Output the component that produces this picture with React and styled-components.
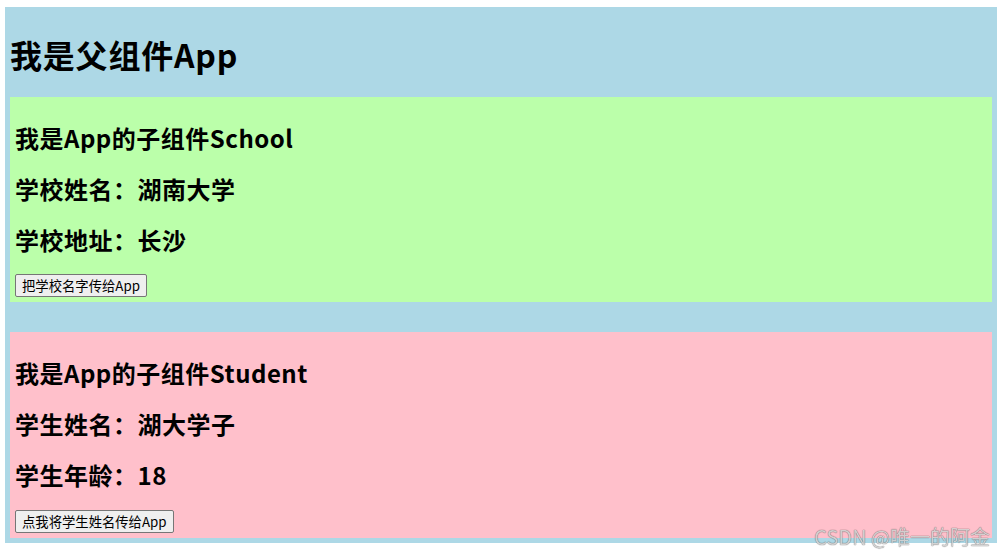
import React from "react";
import styled, { createGlobalStyle } from "styled-components";

const Global = createGlobalStyle`
  html, body { background: #ffffff; }
  body {
    margin: 7px 8px 0 5px;
    font-family: "Noto Sans CJK SC", "Noto Sans", sans-serif;
    color: #000;
  }
`;

const AppBox = styled.div`
  background-color: #add8e6;
  padding: 5px;
`;

const Title = styled.h1`
  font-size: 32px;
  line-height: 42px;
  font-weight: 700;
  margin: 21.44px 0;
  letter-spacing: 0.8px;
`;

const Panel = styled.div`
  background-color: ${(p) => p.$bg};
  padding: 5px;
  margin-top: ${(p) => p.$gap || 0}px;
`;

const Heading = styled.h2`
  font-size: 24px;
  line-height: 31px;
  font-weight: 700;
  margin: 19.9px 0;
  letter-spacing: 0.5px;
`;

const Button = styled.button`
  display: block;
  height: 23px;
  padding: 0 6px;
  font-family: "Noto Sans CJK SC", "Noto Sans", sans-serif;
  font-size: 13.33px;
  line-height: 21px;
  color: #000;
  background: #efefef;
  border: 1px solid #767676;
  border-radius: 2px;
`;

const Watermark = styled.div`
  position: fixed;
  right: 15px;
  bottom: 7px;
  font-family: "Noto Sans CJK SC", "Noto Sans", sans-serif;
  font-size: 20px;
  font-weight: 400;
  line-height: 22px;
  color: rgba(255, 255, 255, 0.75);
  text-shadow: 0 0 1px rgba(0, 0, 0, 0.6), 0 0 1px rgba(0, 0, 0, 0.4);
  pointer-events: none;
`;

function Card({ bg, gap, title, rows, button }) {
  return (
    <Panel $bg={bg} $gap={gap}>
      <Heading>{title}</Heading>
      {rows.map((r) => (
        <Heading key={r}>{r}</Heading>
      ))}
      <Button>{button}</Button>
    </Panel>
  );
}

export default function App() {
  return (
    <>
      <Global />
      <AppBox>
        <Title>我是父组件App</Title>
        <Card
          bg="#bbffaa"
          title="我是App的子组件School"
          rows={["学校姓名：湖南大学", "学校地址：长沙"]}
          button="把学校名字传给App"
        />
        <Card
          bg="#ffc0cb"
          gap={30}
          title="我是App的子组件Student"
          rows={["学生姓名：湖大学子", "学生年龄：18"]}
          button="点我将学生姓名传给App"
        />
      </AppBox>
      <Watermark>CSDN @唯一的阿金</Watermark>
    </>
  );
}
